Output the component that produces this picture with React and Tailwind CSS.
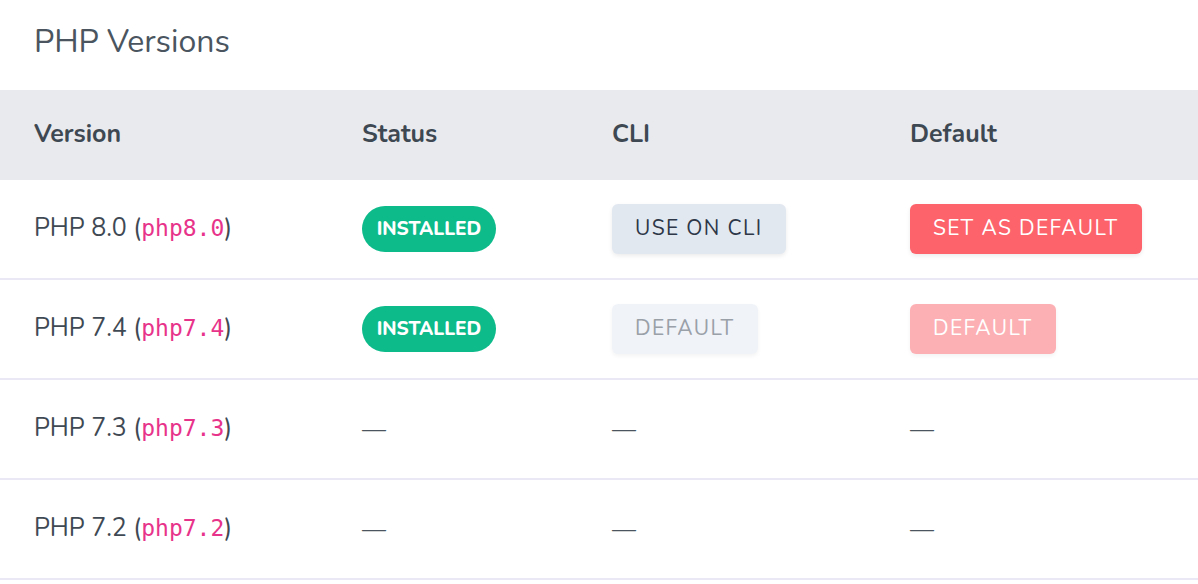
import React from "react";

const rows = [
  { name: "PHP 8.0", id: "php8.0", installed: true, cli: "use", def: "set" },
  { name: "PHP 7.4", id: "php7.4", installed: true, cli: "default", def: "default" },
  { name: "PHP 7.3", id: "php7.3", installed: false },
  { name: "PHP 7.2", id: "php7.2", installed: false },
];

const grid = "grid grid-cols-[328px_250px_298px_1fr] items-center px-[34px]";

function Dash() {
  return <span className="text-[24px] text-[#4a5560]">—</span>;
}

export default function App() {
  return (
    <div
      className="w-[1198px] h-[584px] bg-white text-[#3f4954] overflow-hidden"
      style={{ fontFamily: "Nunito, Lato, 'Open Sans', sans-serif" }}
    >
      <div className="h-[90px] flex items-center px-[34px]">
        <h1 className="text-[32px] font-normal text-[#4a5560] -mt-[6px]">PHP Versions</h1>
      </div>
      <div className={`${grid} h-[90px] bg-[#e9eaed] text-[25px] font-bold text-[#3d4852]`}>
        <div>Version</div>
        <div>Status</div>
        <div>CLI</div>
        <div>Default</div>
      </div>
      {rows.map((r) => (
        <div key={r.id} className={`${grid} h-[100px] border-b-2 border-[#e9e8f4]`}>
          <div className="text-[25px] whitespace-nowrap">
            {r.name} (
            <span
              className="text-[#e8338a] text-[23px]"
              style={{ fontFamily: "'DejaVu Sans Mono', monospace" }}
            >
              {r.id}
            </span>
            )
          </div>
          <div>
            {r.installed ? (
              <span className="inline-flex items-center justify-center h-[46px] w-[134px] rounded-full bg-[#0cba8a] text-white text-[19px] font-extrabold">
                INSTALLED
              </span>
            ) : (
              <Dash />
            )}
          </div>
          <div>
            {r.cli === "use" && (
              <button className="h-[50px] px-[23px] rounded-[6px] bg-[#e2e8f0] text-[#2d3748] text-[21px] tracking-[0.065em] shadow-[0_2px_4px_rgba(0,0,0,0.08)]">
                USE ON CLI
              </button>
            )}
            {r.cli === "default" && (
              <button className="h-[50px] px-[23px] rounded-[6px] bg-[#f0f3f8] text-[#9aa0a8] text-[21px] tracking-[0.065em] shadow-[0_2px_4px_rgba(0,0,0,0.05)]">
                DEFAULT
              </button>
            )}
            {!r.cli && <Dash />}
          </div>
          <div>
            {r.def === "set" && (
              <button className="h-[50px] px-[23px] rounded-[6px] bg-[#fc636b] text-white text-[21px] tracking-[0.065em] shadow-[0_2px_4px_rgba(0,0,0,0.08)]">
                SET AS DEFAULT
              </button>
            )}
            {r.def === "default" && (
              <button className="h-[50px] px-[23px] rounded-[6px] bg-[#fcb0b4] text-white text-[21px] tracking-[0.065em] shadow-[0_2px_4px_rgba(0,0,0,0.05)]">
                DEFAULT
              </button>
            )}
            {!r.def && <Dash />}
          </div>
        </div>
      ))}
    </div>
  );
}
